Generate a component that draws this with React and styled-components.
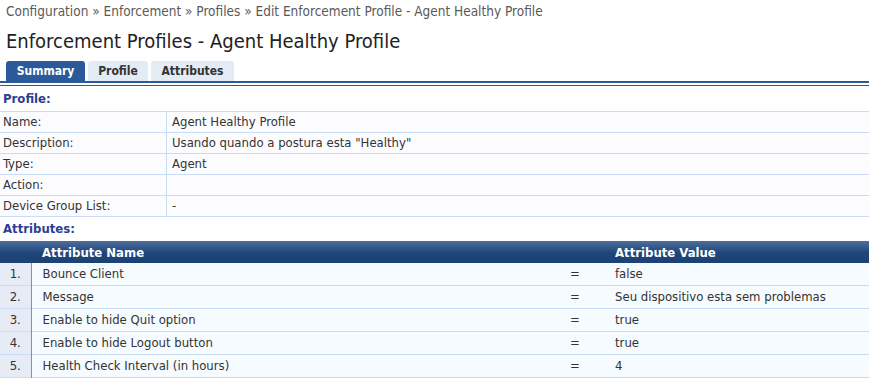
import React from 'react';
import styled, { createGlobalStyle } from 'styled-components';

const GlobalStyle = createGlobalStyle`
  body {
    margin: 0;
    padding: 0;
    background: #ffffff;
    font-family: 'DejaVu Sans Condensed', 'DejaVu Sans', sans-serif;
    font-size: 13px;
    color: #333333;
  }
`;

const Page = styled.div`
  width: 869px;
`;

const Breadcrumb = styled.div`
  padding: 0 6px;
  height: 22px;
  line-height: 22px;
  font-size: 13.5px;
  color: #5a5a5a;
`;

const Title = styled.h1`
  margin: 0;
  padding: 0 6px;
  height: 39px;
  line-height: 38px;
  font-size: 20px;
  font-weight: normal;
  color: #222222;
`;

const TabBar = styled.div`
  display: flex;
  gap: 3px;
  padding: 0 6px;
  border-bottom: 2px solid #2a5a9a;
`;

const Tab = styled.div`
  width: ${p => p.$w}px;
  height: 20px;
  line-height: 20px;
  text-align: center;
  border-radius: 3px 3px 0 0;
  font-weight: bold;
  font-size: 12px;
  background: ${p => (p.$active ? '#2a5a9a' : '#e3ebf4')};
  color: ${p => (p.$active ? '#ffffff' : '#333333')};
`;

const TabRule = styled.div`
  height: 1px;
  margin-top: 2px;
  background: #2a5a9a;
`;

const SectionTitle = styled.div`
  padding: 0 3px;
  height: ${p => p.$h}px;
  line-height: ${p => p.$h}px;
  font-weight: bold;
  font-size: 13px;
  color: #2b3f8f;
`;

const InfoTable = styled.table`
  width: 100%;
  border-collapse: collapse;
  border-spacing: 0;
  background: #fcfcff;
  border-top: 1px solid #c9dcf5;
`;

const InfoRow = styled.tr`
  border-bottom: 1px solid #c9dcf5;
`;

const InfoLabel = styled.td`
  width: 160px;
  height: 20px;
  padding: 0 3px;
  border-right: 1px solid #c9dcf5;
  line-height: 20px;
`;

const InfoValue = styled.td`
  height: 20px;
  padding: 0 5px;
  line-height: 20px;
`;

const AttrTable = styled.table`
  width: 100%;
  border-collapse: collapse;
  border-spacing: 0;
  table-layout: fixed;
  background: #f6fbff;
`;

const HeadRow = styled.tr`
  background: linear-gradient(#4d6f9e, #1f4478 55%, #1c4175);
  color: #ffffff;
`;

const HeadCell = styled.th`
  height: 22px;
  padding: 0 0 0 ${p => p.$pad || 0}px;
  text-align: left;
  font-weight: bold;
  font-size: 13px;
  line-height: 21px;
`;

const AttrRow = styled.tr`
  border-bottom: 1px solid #c9dcf5;
`;

const IndexCell = styled.td`
  height: 22px;
  padding: 0;
  text-align: center;
  background: #e6ebf5;
  border-right: 1px solid #8a8f99;
  line-height: 22px;
`;

const AttrCell = styled.td`
  height: 22px;
  padding: 0 0 0 ${p => p.$pad || 0}px;
  line-height: 22px;
  white-space: nowrap;
`;

const profileRows = [
  ['Name:', 'Agent Healthy Profile'],
  ['Description:', 'Usando quando a postura esta "Healthy"'],
  ['Type:', 'Agent'],
  ['Action:', ''],
  ['Device Group List:', '-'],
];

const attributes = [
  ['Bounce Client', 'false'],
  ['Message', 'Seu dispositivo esta sem problemas'],
  ['Enable to hide Quit option', 'true'],
  ['Enable to hide Logout button', 'true'],
  ['Health Check Interval (in hours)', '4'],
];

export default function App() {
  return (
    <Page>
      <GlobalStyle />
      <Breadcrumb>
        Configuration » Enforcement » Profiles » Edit Enforcement Profile - Agent Healthy Profile
      </Breadcrumb>
      <Title>Enforcement Profiles - Agent Healthy Profile</Title>
      <TabBar>
        <Tab $active $w={79}>Summary</Tab>
        <Tab $w={60}>Profile</Tab>
        <Tab $w={83}>Attributes</Tab>
      </TabBar>
      <TabRule />
      <SectionTitle $h={25}>Profile:</SectionTitle>
      <InfoTable>
        <tbody>
          {profileRows.map(([label, value]) => (
            <InfoRow key={label}>
              <InfoLabel>{label}</InfoLabel>
              <InfoValue>{value}</InfoValue>
            </InfoRow>
          ))}
        </tbody>
      </InfoTable>
      <SectionTitle $h={24}>Attributes:</SectionTitle>
      <AttrTable>
        <colgroup>
          <col style={{ width: 31 }} />
          <col style={{ width: 529 }} />
          <col style={{ width: 55 }} />
          <col />
        </colgroup>
        <thead>
          <HeadRow>
            <HeadCell />
            <HeadCell $pad={11}>Attribute Name</HeadCell>
            <HeadCell />
            <HeadCell>Attribute Value</HeadCell>
          </HeadRow>
        </thead>
        <tbody>
          {attributes.map(([name, value], i) => (
            <AttrRow key={name}>
              <IndexCell>{i + 1}.</IndexCell>
              <AttrCell $pad={11}>{name}</AttrCell>
              <AttrCell $pad={10}>=</AttrCell>
              <AttrCell>{value}</AttrCell>
            </AttrRow>
          ))}
        </tbody>
      </AttrTable>
    </Page>
  );
}
